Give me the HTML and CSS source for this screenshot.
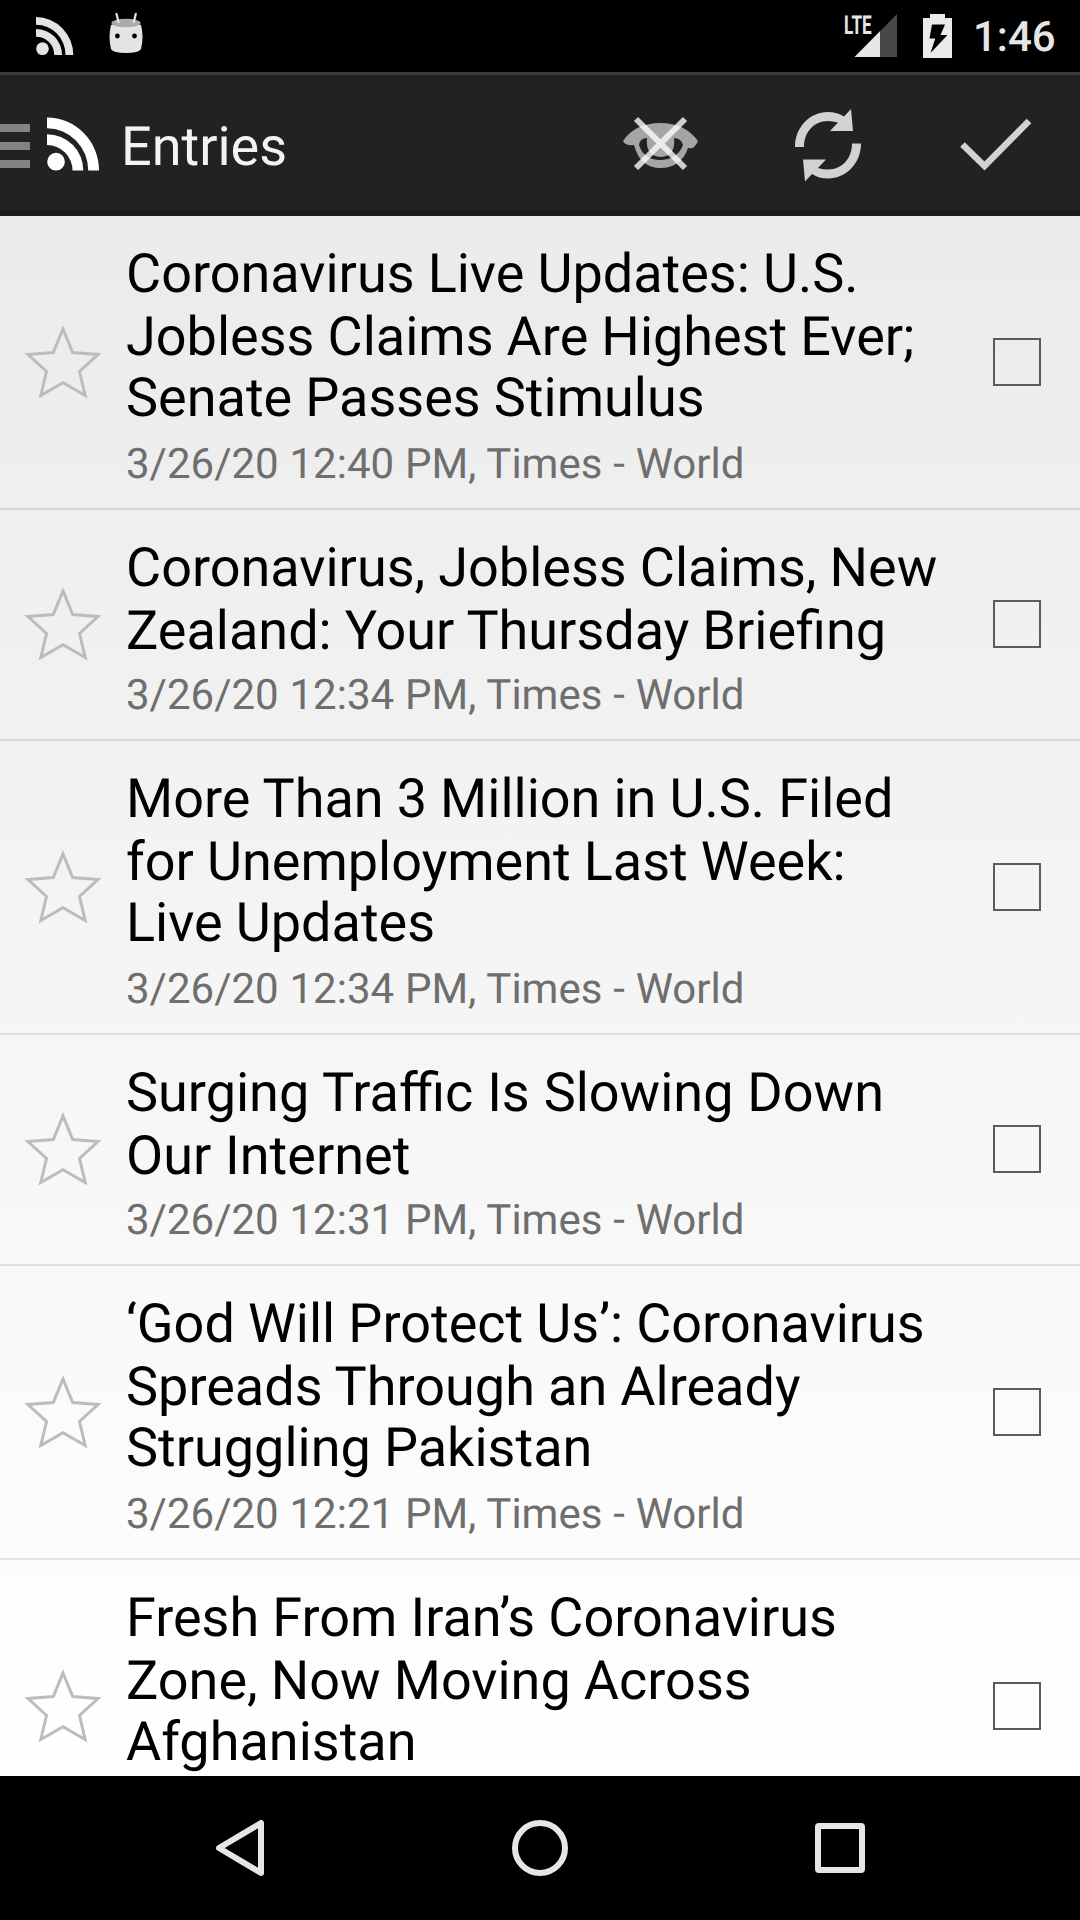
FILE: index.html
```html
<!DOCTYPE html>
<html lang="en">
<head>
<meta charset="utf-8">
<title>Entries</title>
<link rel="stylesheet" href="styles.css">
</head>
<body>
<svg class="defs" width="0" height="0">
  <symbol id="star" viewBox="0 0 78 76"><path d="M39 5 L48.7 28.6 L74 30.500 L55.500 47.500 L61.200 71.500 L39 58.800 L16.800 71.500 L22.500 47.500 L4 30.500 L29.300 28.600 Z" fill="none" stroke="#bcbcbc" stroke-width="3"/></symbol>
  <symbol id="rss" viewBox="0 0 54 54"><circle cx="9.2" cy="45" r="9"/><path d="M0 17 A37 37 0 0 1 37 54 H26 A26 26 0 0 0 0 28 Z M0 0 A53 54 0 0 1 53 54 H42 A42 43 0 0 0 0 11 Z"/></symbol>
</svg>
<div class="screen">
  <header class="status">
    <svg class="status-rss"><use href="#rss"/></svg>
    <svg class="droid" width="34" height="41" viewBox="0 0 34 41"><path d="M2 12 Q17 6 32 12 Q35 24 32 36 Q30 40 17 40 Q4 40 2 36 Q-1 24 2 12Z" fill="#e4e4e4"/><ellipse cx="17" cy="10" rx="14.6" ry="4.2" fill="#ababab"/><path d="M7.5 1 L9.5 9 M26.8 1 L24.8 9" stroke="#e4e4e4" stroke-width="2.2" stroke-linecap="round"/><circle cx="8.4" cy="23" r="2.4"/><circle cx="25.5" cy="23" r="2.4"/></svg>
    <span class="grow"></span>
    <span class="signal">
      <svg width="54" height="43" viewBox="0 0 54 43"><path d="M10.500 43 L53 0 V43Z" fill="#484848"/><path d="M10.500 43 L36 17.200 V43Z" fill="#e6e6e6"/></svg>
      <span class="lte">LTE</span>
    </span>
    <svg class="battery" width="29" height="44" viewBox="0 0 29 44"><path fill-rule="evenodd" d="M7 0 H22 V4 H29 V44 H0 V4 H7Z M9 10.500 H22 L17.500 21 H24.500 L7.500 39 L12.300 24.500 H6.500Z" fill="#ebebeb"/></svg>
    <time class="clock">1:46</time>
  </header>
  <nav class="appbar">
    <span class="drawer"><i></i><i></i><i></i></span>
    <svg class="logo"><use href="#rss"/></svg>
    <h1>Entries</h1>
    <svg class="eye" width="76" height="56" viewBox="0 0 76 56"><path fill="#a5a5a5" fill-rule="evenodd" d="M0 25 Q12 7 37.500 7 Q62 7 75 25 Q71 34 65 32 Q58 52 37.500 52 Q17 52 11 29 Q2 30 0 25Z M24 22 Q17 22 16 29 Q21 44 37 44 Q54 44 60 29 Q58 22 51 22 Q53 40 38 41 Q22 40 24 22Z"/><path d="M13 3 L62 52 M62 3 L13 52" stroke="#fff" stroke-opacity=".78" stroke-width="6"/></svg>
    <svg class="refresh" width="66" height="74" viewBox="0 0 66 74"><path id="arrow" fill="#d2d2d2" d="M0 38 C0 18 15 3 33 3 Q42 3 49 7.500 L56 0 L58 22 H35 L43 13.500 Q38 12 33 12 C19 12 9 23 9 38Z"/><use href="#arrow" transform="rotate(180 33 36.300)"/></svg>
    <svg class="check" width="72" height="56" viewBox="0 0 72 56"><path d="M2.500 27.500 L24.500 49 L69 4" fill="none" stroke="#d2d2d2" stroke-width="6.500"/></svg>
  </nav>
  <main class="list">
    <article><svg class="star"><use href="#star"/></svg><div class="copy"><h2><span>Coronavirus Live Updates: U.S.</span><span>Jobless Claims Are Highest Ever;</span><span>Senate Passes Stimulus</span></h2><p>3/26/20 12:40 PM, Times - World</p></div><i class="box"></i></article>
    <article><svg class="star"><use href="#star"/></svg><div class="copy"><h2><span>Coronavirus, Jobless Claims, New</span><span>Zealand: Your Thursday Briefing</span></h2><p>3/26/20 12:34 PM, Times - World</p></div><i class="box"></i></article>
    <article><svg class="star"><use href="#star"/></svg><div class="copy"><h2><span>More Than 3 Million in U.S. Filed</span><span>for Unemployment Last Week:</span><span>Live Updates</span></h2><p>3/26/20 12:34 PM, Times - World</p></div><i class="box"></i></article>
    <article><svg class="star"><use href="#star"/></svg><div class="copy"><h2><span>Surging Traffic Is Slowing Down</span><span>Our Internet</span></h2><p>3/26/20 12:31 PM, Times - World</p></div><i class="box"></i></article>
    <article><svg class="star"><use href="#star"/></svg><div class="copy"><h2><span>‘God Will Protect Us’: Coronavirus</span><span>Spreads Through an Already</span><span>Struggling Pakistan</span></h2><p>3/26/20 12:21 PM, Times - World</p></div><i class="box"></i></article>
    <article><svg class="star"><use href="#star"/></svg><div class="copy"><h2><span>Fresh From Iran’s Coronavirus</span><span>Zone, Now Moving Across</span><span>Afghanistan</span></h2></div><i class="box"></i></article>
  </main>
  <footer class="navbar">
    <svg width="56" height="60" viewBox="0 0 56 60"><path d="M49 5 V55 L7 30Z" fill="none" stroke="#e6e6e6" stroke-width="6" stroke-linejoin="round"/></svg>
    <svg width="56" height="60" viewBox="0 0 56 60"><circle cx="28" cy="30" r="25" fill="none" stroke="#e6e6e6" stroke-width="6"/></svg>
    <svg width="56" height="60" viewBox="0 0 56 60"><rect x="6" y="8" width="44" height="44" rx="1" fill="none" stroke="#e6e6e6" stroke-width="6"/></svg>
  </footer>
</div>
</body>
</html>
```
FILE: styles.css
```css
* { box-sizing: border-box; }
body { margin: 0; background: #000; font-family: Roboto, sans-serif; text-rendering: geometricPrecision; }
h1, h2, p { margin: 0; font-weight: 400; }
svg { display: block; flex: none; }
.defs { position: absolute; }
.screen { width: 1080px; height: 1920px; display: flex; flex-direction: column; overflow: hidden; }

.status { height: 72px; flex: none; display: flex; align-items: flex-start; background: #000; padding-left: 36px; }
.status-rss { width: 38px; height: 38px; margin-top: 17px; fill: #e4e4e4; }
.droid { margin: 12.5px 0 0 35px; }
.grow { flex: 1; }
.signal { position: relative; margin: 14px 25px 0 0; }
.lte { position: absolute; left: 0; top: -1px; color: #e6e6e6; font-size: 26px; line-height: 26px; font-weight: 700; transform: scaleX(.66); transform-origin: 0 0; }
.battery { margin-top: 14px; }
.clock { width: 128px; padding-left: 21px; color: #e6e6e6; font-size: 42px; line-height: 48px; font-weight: 500; margin-top: 14px; }

.appbar { height: 144px; flex: none; display: flex; align-items: flex-start; background: #222; border-top: 3px solid #3b3b3b; border-bottom: 6px solid #1a1a1a; }
.drawer { width: 30px; margin-top: 49px; display: grid; gap: 10px; }
.drawer i { height: 8px; background: #828387; }
.logo { width: 53px; height: 54px; margin: 42px 0 0 17px; fill: #fff; }
.appbar h1 { margin: 41px 0 0 21px; width: 502px; font-size: 54px; line-height: 64px; color: #f3f3f3; }
.eye { margin-top: 41px; }
.refresh { margin: 34px 0 0 96px; }
.check { margin: 42px 0 0 99px; }

.list { flex: 1; min-height: 0; overflow: hidden; background: linear-gradient(#ebebeb, #fff); }
article { height: 294px; padding: 24px 39px 0 24px; display: flex; border-bottom: 2px solid rgba(0, 0, 0, .1); }
article:nth-child(2n) { height: 231px; }
article:last-child { height: 294px; }
.star { width: 78px; height: 76px; margin-top: 84px; }
.copy { margin-left: 24px; flex: 1; white-space: nowrap; }
h2 { font-size: 54px; line-height: 63px; color: #000; padding-top: 3px; word-spacing: -.3px; }
article:nth-child(4) h2 { word-spacing: .5px; }
h2 span { display: block; }
h2 span:nth-child(3) { line-height: 59px; }
p { font-size: 42px; line-height: 50px; color: #6e6e6e; margin-top: 12px; word-spacing: .4px; }
.box { width: 48px; height: 48px; border: 2px solid #5b5b5b; margin-top: 98px; flex: none; }
article:nth-child(2n) p { margin-top: 8px; }
article:nth-child(2n) .star { margin-top: 52px; }
article:nth-child(2n) .box { margin-top: 66px; }
article:last-child .star { margin-top: 84px; }
article:last-child .box { margin-top: 98px; }

.navbar { height: 144px; flex: none; display: flex; justify-content: center; gap: 244px; padding-top: 42px; background: #000; }
```
